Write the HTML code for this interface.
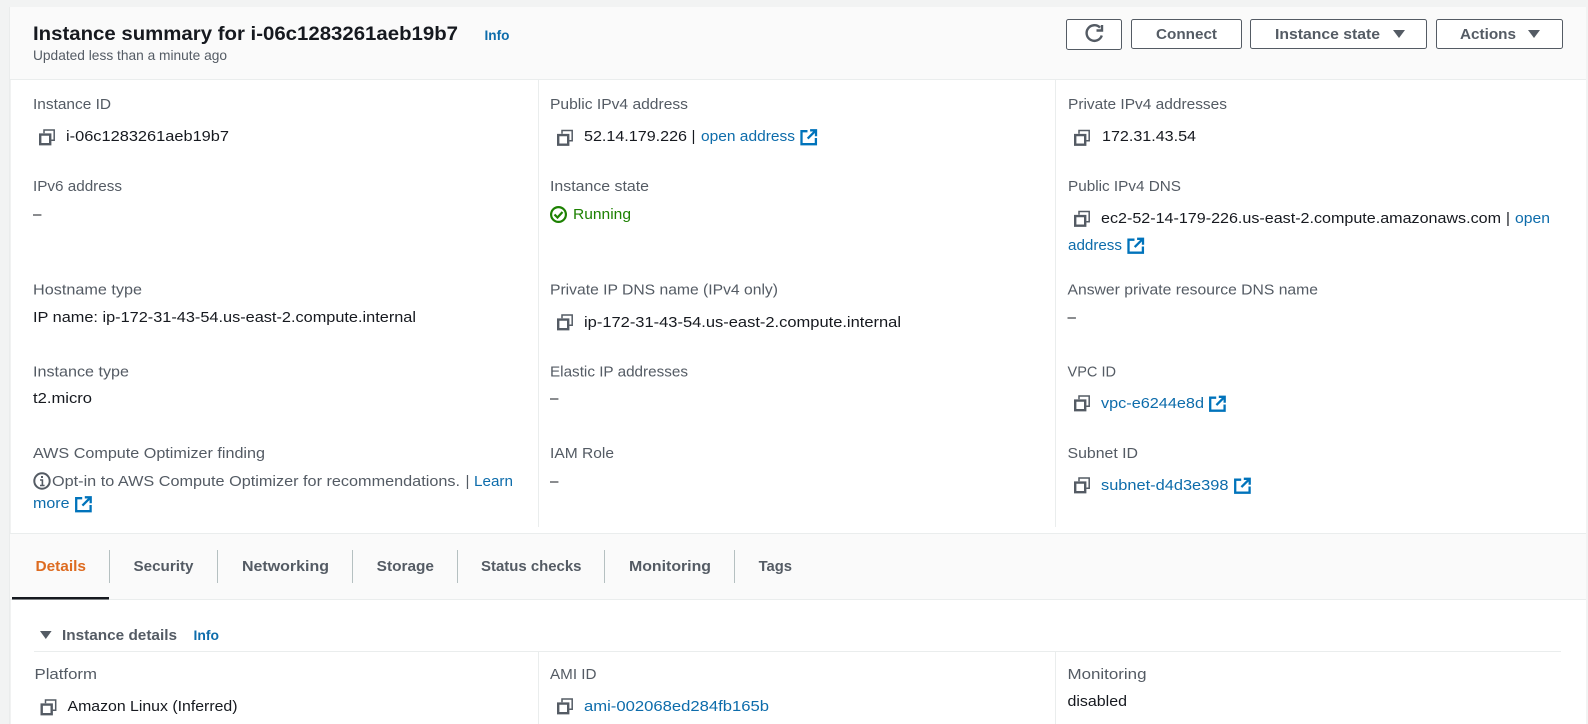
<!DOCTYPE html>
<html lang="en"><head><meta charset="utf-8"><title>Instance summary</title>
<style>
html,body{margin:0;padding:0;width:1588px;height:724px;overflow:hidden;background:#f2f3f3}
svg{display:block;font-family:"Liberation Sans",sans-serif;filter:blur(.3px)}
text{font-size:15.2px;fill:#16191f}
.l{fill:#545b64}
.a{fill:#0d6cab}
.b{font-weight:700;fill:#545b64}
.i{font-weight:700;fill:#0d6cab;font-size:13.6px}
.bt{fill:#fff;stroke:#545b64;stroke-width:1}
.e{fill:none;stroke:#0073bb;stroke-width:2.3}
</style></head><body>
<svg width="1588" height="724" viewBox="0 0 1588 724" xmlns="http://www.w3.org/2000/svg">
<defs>
<g id="cp"><path d="M1.2 5.6h10v9.6h-10z" fill="none" stroke="#545b64" stroke-width="2.4"/><path d="M5 4.2V1h10.2v10.2h-3" fill="none" stroke="#545b64" stroke-width="1.5"/></g>
<g id="ex"><path class="e" d="M7.2 2.2H1.2v13h14.4V9"/><path class="e" d="M9.8 1.3h5.9v5.9"/><path class="e" d="M15.4 1.6L7.4 9.6"/></g>
</defs>
<!-- panel -->
<rect x="10" y="7" width="1576" height="717" fill="#fff"/>
<rect x="9.5" y="7" width="1" height="717" fill="#e3e5e6"/>
<rect x="10" y="7" width="1576" height="72" fill="#fafafa"/>
<rect x="10" y="79" width="1576" height="1" fill="#eaeded"/>
<rect x="538" y="80" width="1" height="447" fill="#eaeded"/>
<rect x="1055" y="80" width="1" height="447" fill="#eaeded"/>
<!-- header -->
<text x="33" y="40" style="font-size:19.4px;font-weight:700" textLength="425" lengthAdjust="spacingAndGlyphs">Instance summary for i-06c1283261aeb19b7</text>
<text x="484.5" y="40" class="i" textLength="25" lengthAdjust="spacingAndGlyphs">Info</text>
<text x="33" y="60" class="l" style="font-size:13.6px" textLength="194" lengthAdjust="spacingAndGlyphs">Updated less than a minute ago</text>
<!-- buttons -->
<rect class="bt" x="1066.5" y="19.5" width="55" height="30" rx="2"/>
<path d="M1100 27.6A7.8 7.8 0 1 0 1101.8 35.5" fill="none" stroke="#545b64" stroke-width="2.4"/>
<path d="M1102 25v5.5h-5.5" fill="none" stroke="#545b64" stroke-width="2.4"/>
<rect class="bt" x="1131.5" y="19.5" width="110" height="29" rx="2"/>
<text x="1156" y="39" class="b" textLength="61" lengthAdjust="spacingAndGlyphs">Connect</text>
<rect class="bt" x="1250.5" y="19.5" width="176" height="29" rx="2"/>
<text x="1275" y="39" class="b" textLength="105" lengthAdjust="spacingAndGlyphs">Instance state</text>
<path d="M1393 30h12l-6 8z" fill="#545b64"/>
<rect class="bt" x="1436.5" y="19.5" width="126" height="29" rx="2"/>
<text x="1460" y="39" class="b" textLength="56" lengthAdjust="spacingAndGlyphs">Actions</text>
<path d="M1528 30h12l-6 8z" fill="#545b64"/>
<!-- column 1 -->
<text x="33" y="109" class="l" textLength="78" lengthAdjust="spacingAndGlyphs">Instance ID</text>
<use href="#cp" x="39" y="129"/>
<text x="66" y="141" textLength="163" lengthAdjust="spacingAndGlyphs">i-06c1283261aeb19b7</text>
<text x="33" y="191" class="l" textLength="89" lengthAdjust="spacingAndGlyphs">IPv6 address</text>
<text x="33" y="219">–</text>
<text x="33" y="294.5" class="l" textLength="109" lengthAdjust="spacingAndGlyphs">Hostname type</text>
<text x="33" y="322" textLength="383" lengthAdjust="spacingAndGlyphs">IP name: ip-172-31-43-54.us-east-2.compute.internal</text>
<text x="33" y="376.5" class="l" textLength="96" lengthAdjust="spacingAndGlyphs">Instance type</text>
<text x="33" y="403" textLength="59" lengthAdjust="spacingAndGlyphs">t2.micro</text>
<text x="33" y="458" class="l" textLength="232" lengthAdjust="spacingAndGlyphs">AWS Compute Optimizer finding</text>
<circle cx="42" cy="481" r="7.7" fill="none" stroke="#545b64" stroke-width="2"/>
<path d="M40 480h2.4v5M40 485.5h4.6" fill="none" stroke="#545b64" stroke-width="1.6"/>
<rect x="41" y="476" width="2" height="2" fill="#545b64"/>
<text x="52" y="486" class="l" textLength="408" lengthAdjust="spacingAndGlyphs">Opt-in to AWS Compute Optimizer for recommendations.</text>
<text x="465.5" y="486" class="l">|</text>
<text x="474" y="486" class="a" textLength="39" lengthAdjust="spacingAndGlyphs">Learn</text>
<text x="33" y="508" class="a" textLength="36.5" lengthAdjust="spacingAndGlyphs">more</text>
<use href="#ex" x="75" y="496"/>
<!-- column 2 -->
<text x="550" y="109" class="l" textLength="138" lengthAdjust="spacingAndGlyphs">Public IPv4 address</text>
<use href="#cp" x="557" y="129.5"/>
<text x="584" y="141" textLength="103" lengthAdjust="spacingAndGlyphs">52.14.179.226</text>
<text x="691.5" y="141">|</text>
<text x="701" y="141" class="a" textLength="94" lengthAdjust="spacingAndGlyphs">open address</text>
<use href="#ex" x="800.3" y="129"/>
<text x="550" y="191" class="l" textLength="99" lengthAdjust="spacingAndGlyphs">Instance state</text>
<circle cx="558.5" cy="214.5" r="7.4" fill="none" stroke="#1d8102" stroke-width="2.2"/>
<path d="M554.5 214.5l3 3 5-5.5" fill="none" stroke="#1d8102" stroke-width="2.2"/>
<text x="573" y="219" style="fill:#1d8102" textLength="58" lengthAdjust="spacingAndGlyphs">Running</text>
<text x="550" y="294.5" class="l" textLength="228" lengthAdjust="spacingAndGlyphs">Private IP DNS name (IPv4 only)</text>
<use href="#cp" x="557" y="314"/>
<text x="584" y="327" textLength="317" lengthAdjust="spacingAndGlyphs">ip-172-31-43-54.us-east-2.compute.internal</text>
<text x="550" y="376.5" class="l" textLength="138" lengthAdjust="spacingAndGlyphs">Elastic IP addresses</text>
<text x="550" y="403">–</text>
<text x="550" y="458" class="l" textLength="64" lengthAdjust="spacingAndGlyphs">IAM Role</text>
<text x="550" y="486">–</text>
<!-- column 3 -->
<text x="1068" y="109" class="l" textLength="159" lengthAdjust="spacingAndGlyphs">Private IPv4 addresses</text>
<use href="#cp" x="1074" y="129.5"/>
<text x="1102" y="141" textLength="94" lengthAdjust="spacingAndGlyphs">172.31.43.54</text>
<text x="1068" y="191" class="l" textLength="113" lengthAdjust="spacingAndGlyphs">Public IPv4 DNS</text>
<use href="#cp" x="1074" y="210.5"/>
<text x="1101" y="223" textLength="400" lengthAdjust="spacingAndGlyphs">ec2-52-14-179-226.us-east-2.compute.amazonaws.com</text>
<text x="1506" y="223">|</text>
<text x="1515" y="223" class="a" textLength="35" lengthAdjust="spacingAndGlyphs">open</text>
<text x="1068" y="250" class="a" textLength="54" lengthAdjust="spacingAndGlyphs">address</text>
<use href="#ex" x="1127.3" y="237.5"/>
<text x="1067.5" y="294.5" class="l" textLength="250.5" lengthAdjust="spacingAndGlyphs">Answer private resource DNS name</text>
<text x="1067.5" y="322">–</text>
<text x="1067.5" y="376.5" class="l" textLength="48.5" lengthAdjust="spacingAndGlyphs">VPC ID</text>
<use href="#cp" x="1074" y="395"/>
<text x="1101" y="408" class="a" textLength="103" lengthAdjust="spacingAndGlyphs">vpc-e6244e8d</text>
<use href="#ex" x="1209" y="395.5"/>
<text x="1067.5" y="458" class="l" textLength="70.5" lengthAdjust="spacingAndGlyphs">Subnet ID</text>
<use href="#cp" x="1074" y="477"/>
<text x="1101" y="490" class="a" textLength="127.5" lengthAdjust="spacingAndGlyphs">subnet-d4d3e398</text>
<use href="#ex" x="1234" y="477.5"/>
<!-- tabs -->
<rect x="10" y="533" width="1576" height="67" fill="#fafafa"/>
<rect x="10" y="533" width="1576" height="1" fill="#eaeded"/>
<rect x="10" y="599" width="1576" height="1" fill="#eaeded"/>
<rect x="12" y="597" width="97" height="2.5" fill="#16191f"/>
<text x="35.5" y="571" style="font-weight:700;fill:#dd6b20" textLength="50.5" lengthAdjust="spacingAndGlyphs">Details</text>
<g fill="#b5c0c1">
<rect x="109" y="550" width="1" height="33"/><rect x="217" y="550" width="1" height="33"/><rect x="352" y="550" width="1" height="33"/><rect x="457" y="550" width="1" height="33"/><rect x="604" y="550" width="1" height="33"/><rect x="734" y="550" width="1" height="33"/>
</g>
<text x="133.5" y="571" class="b" textLength="60" lengthAdjust="spacingAndGlyphs">Security</text>
<text x="242" y="571" class="b" textLength="87" lengthAdjust="spacingAndGlyphs">Networking</text>
<text x="376.7" y="571" class="b" textLength="57.3" lengthAdjust="spacingAndGlyphs">Storage</text>
<text x="481" y="571" class="b" textLength="100.5" lengthAdjust="spacingAndGlyphs">Status checks</text>
<text x="629" y="571" class="b" textLength="82" lengthAdjust="spacingAndGlyphs">Monitoring</text>
<text x="758.6" y="571" class="b" textLength="33.4" lengthAdjust="spacingAndGlyphs">Tags</text>
<!-- details -->
<path d="M40 631h11.6l-5.8 8z" fill="#545b64"/>
<text x="62" y="640" class="b" textLength="115" lengthAdjust="spacingAndGlyphs">Instance details</text>
<text x="193.5" y="640" class="i" textLength="25.5" lengthAdjust="spacingAndGlyphs">Info</text>
<rect x="34" y="651" width="1527" height="1" fill="#eaeded"/>
<rect x="538" y="652" width="1" height="72" fill="#eaeded"/>
<rect x="1055" y="652" width="1" height="72" fill="#eaeded"/>
<text x="34.5" y="679" class="l" textLength="62.5" lengthAdjust="spacingAndGlyphs">Platform</text>
<use href="#cp" x="40.5" y="699"/>
<text x="67.5" y="711" textLength="170" lengthAdjust="spacingAndGlyphs">Amazon Linux (Inferred)</text>
<text x="550" y="679" class="l" textLength="46.5" lengthAdjust="spacingAndGlyphs">AMI ID</text>
<use href="#cp" x="557" y="698"/>
<text x="584" y="711" class="a" textLength="185" lengthAdjust="spacingAndGlyphs">ami-002068ed284fb165b</text>
<text x="1067.5" y="679" class="l" textLength="79" lengthAdjust="spacingAndGlyphs">Monitoring</text>
<text x="1067.5" y="706" textLength="59.5" lengthAdjust="spacingAndGlyphs">disabled</text>
</svg>
</body></html>
